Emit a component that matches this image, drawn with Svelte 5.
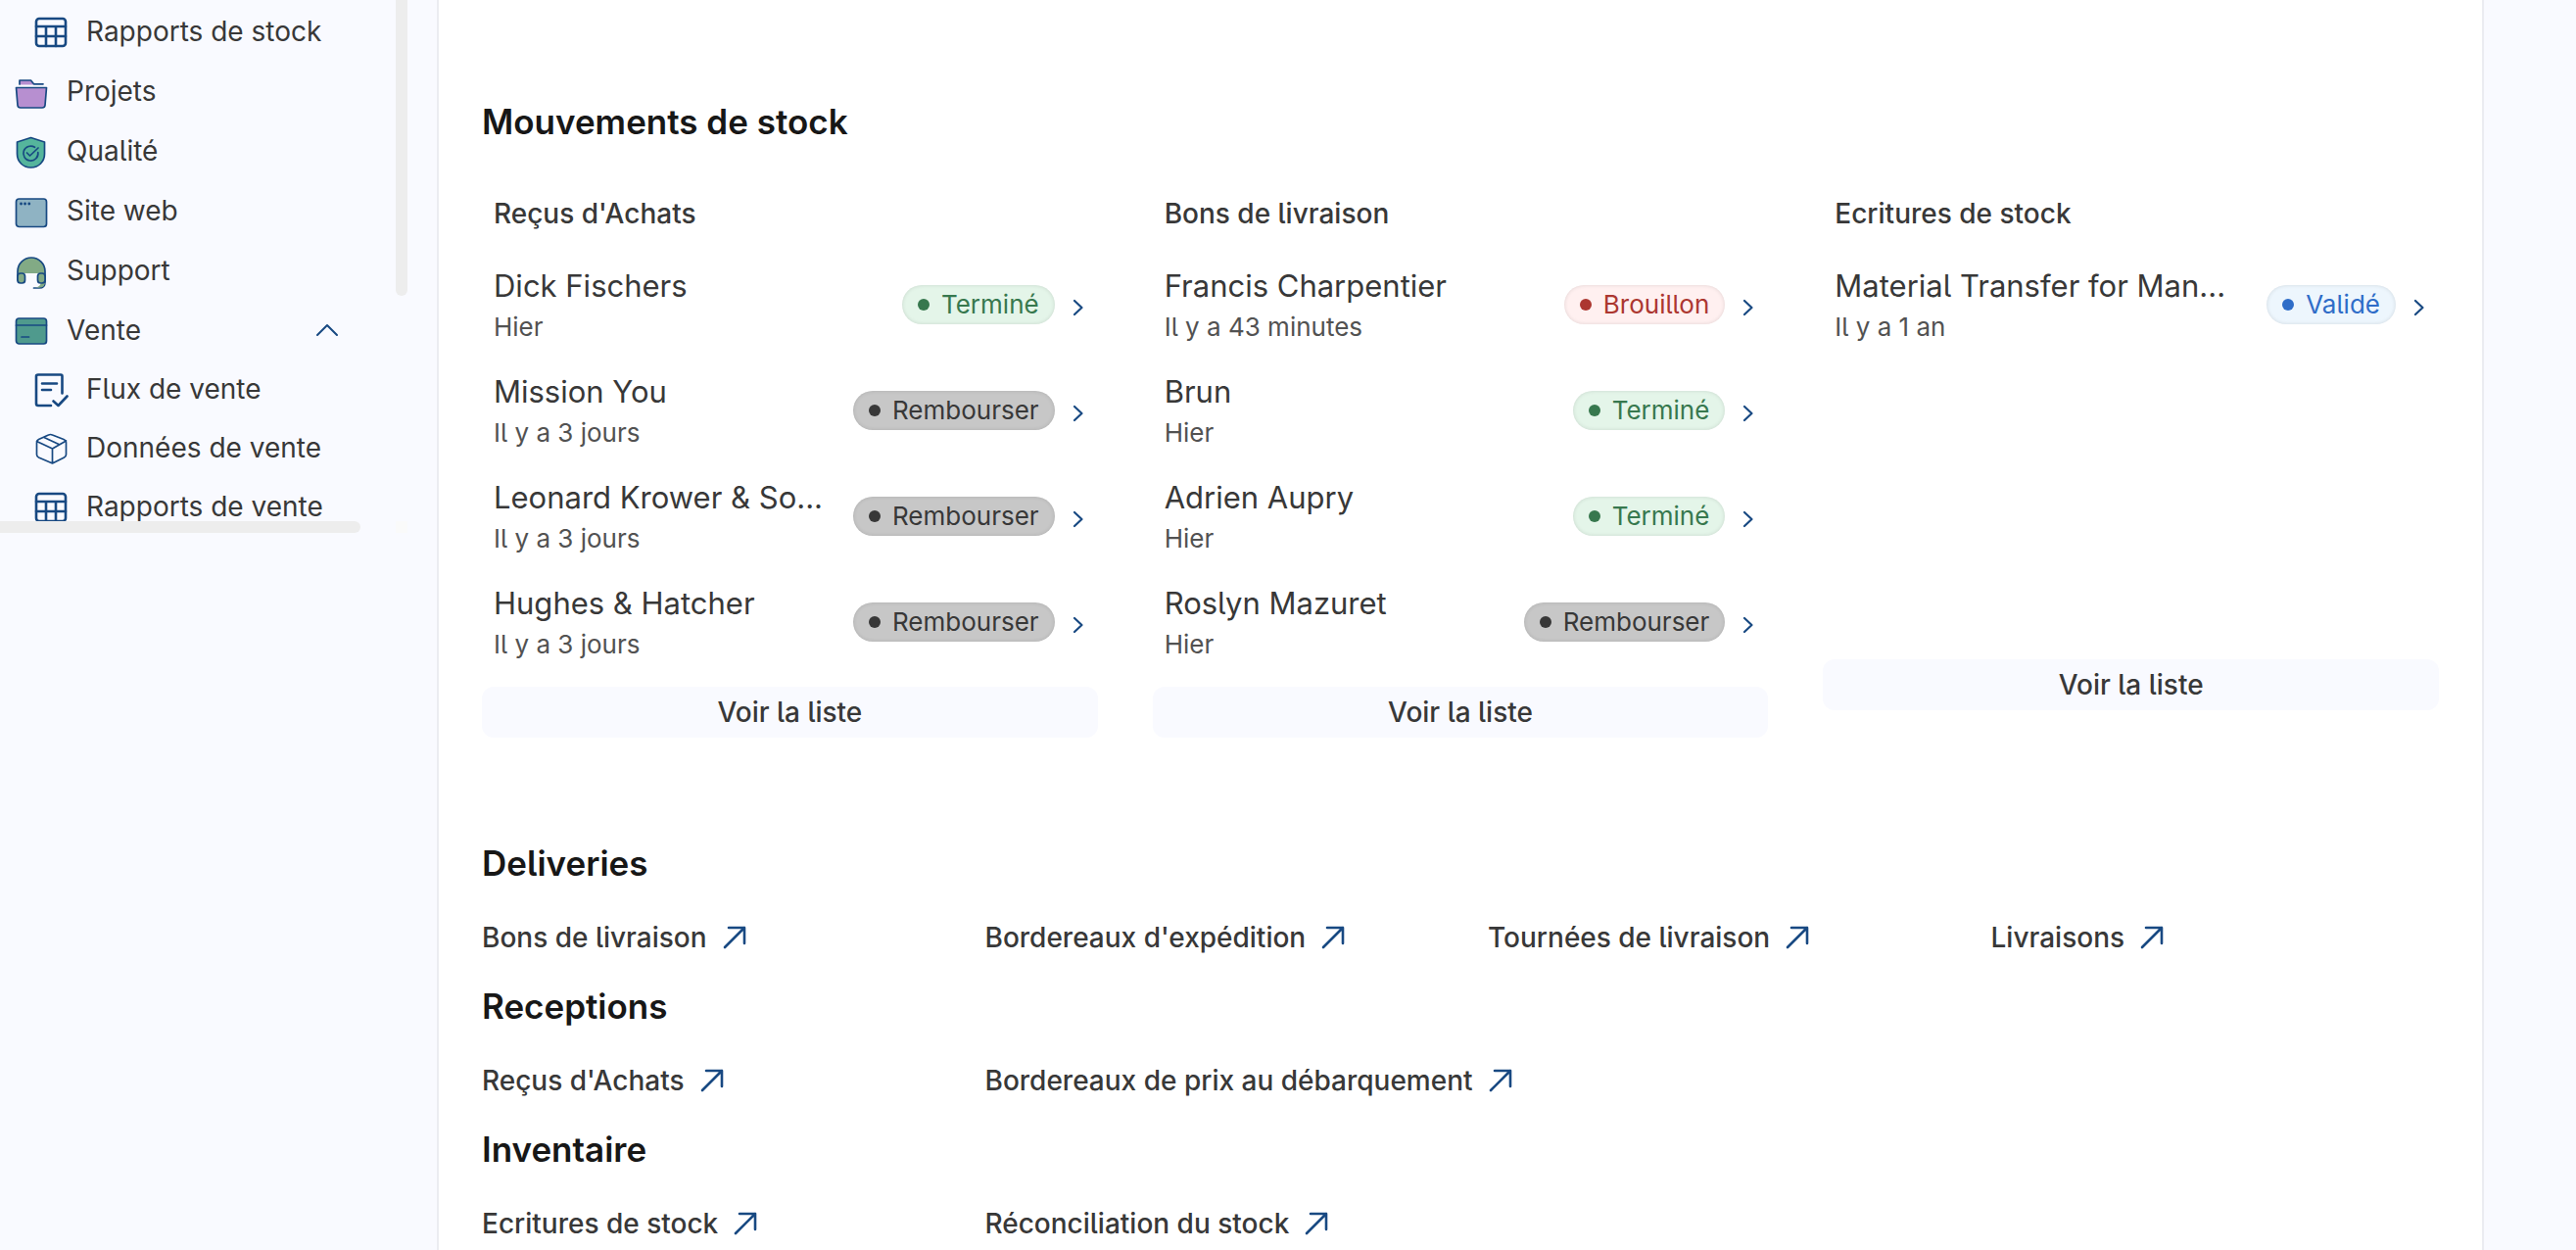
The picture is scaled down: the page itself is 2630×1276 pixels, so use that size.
<script>
  const nav = [
    { label: 'Rapports de stock', icon: 'table', sub: true },
    { label: 'Projets', icon: 'folder' },
    { label: 'Qualité', icon: 'shield' },
    { label: 'Site web', icon: 'window' },
    { label: 'Support', icon: 'headset' },
    { label: 'Vente', icon: 'card', open: true },
    { label: 'Flux de vente', icon: 'flow', sub: true },
    { label: 'Données de vente', icon: 'box', sub: true },
    { label: 'Rapports de vente', icon: 'table', sub: true }
  ];

  const lists = [
    {
      title: "Reçus d'Achats",
      rows: [
        { name: 'Dick Fischers', when: 'Hier', status: 'Terminé', tone: 'green' },
        { name: 'Mission You', when: 'Il y a 3 jours', status: 'Rembourser', tone: 'gray' },
        { name: 'Leonard Krower & So...', when: 'Il y a 3 jours', status: 'Rembourser', tone: 'gray' },
        { name: 'Hughes & Hatcher', when: 'Il y a 3 jours', status: 'Rembourser', tone: 'gray' }
      ]
    },
    {
      title: 'Bons de livraison',
      rows: [
        { name: 'Francis Charpentier', when: 'Il y a 43 minutes', status: 'Brouillon', tone: 'red' },
        { name: 'Brun', when: 'Hier', status: 'Terminé', tone: 'green' },
        { name: 'Adrien Aupry', when: 'Hier', status: 'Terminé', tone: 'green' },
        { name: 'Roslyn Mazuret', when: 'Hier', status: 'Rembourser', tone: 'gray' }
      ]
    },
    {
      title: 'Ecritures de stock',
      rows: [
        { name: 'Material Transfer for Man...', when: 'Il y a 1 an', status: 'Validé', tone: 'blue' }
      ]
    }
  ];

  const groups = [
    { title: 'Deliveries', links: ['Bons de livraison', "Bordereaux d'expédition", 'Tournées de livraison', 'Livraisons'] },
    { title: 'Receptions', links: ["Reçus d'Achats", 'Bordereaux de prix au débarquement'] },
    { title: 'Inventaire', links: ['Ecritures de stock', 'Réconciliation du stock'] }
  ];
</script>

{#snippet icon(name)}
  <svg class="icon" viewBox="0 0 36 36" aria-hidden="true">
    {#if name === 'table'}
      <g class="line">
        <rect x="3" y="4" width="30" height="28" rx="3" />
        <path d="M3 12H33M3 22H33M13 12V32M23 12V32" />
      </g>
    {:else if name === 'folder'}
      <path class="purple" d="M6 9.500V5H17L20 8.800V9.500Z" />
      <path class="thin" d="M6 9V5H17.500L20.500 8.800H30" />
      <path class="thin purple" d="M2.500 12.500H33.500L32 30.500Q31.700 33 29 33H7Q4.300 33 4 30.500Z" />
    {:else if name === 'shield'}
      <path class="thin mint" d="M17.500 2.500L31.500 7V19C31.500 27 25.500 33 17.500 33S3.500 27 3.500 19V7Z" />
      <path class="thin" d="M21.500 12.300A7.500 7.500 0 1 0 24.800 17.500M13.500 18L16.500 21L25 13" />
    {:else if name === 'window'}
      <rect class="thin sky" x="2.500" y="4" width="31" height="28.500" rx="3" />
      <path class="dots" d="M7.500 9H7.600M11.500 9H11.600M15.700 9H15.800" />
    {:else if name === 'headset'}
      <path class="sage" d="M4 19V17A14 14 0 0 1 32 17V19Z" />
      <path class="thin" d="M4 26V17A14 14 0 0 1 32 17V28Q32 34 26 34H20.500" />
      <path class="sage" d="M22 33.500Q27 32.500 27.500 29.500L32 28Q32 33.500 26 33.500Z" />
      <rect class="thin sage" x="4" y="19" width="7.500" height="10" rx="3" />
      <rect class="thin sage" x="24.500" y="19" width="7.500" height="10" rx="3" />
    {:else if name === 'card'}
      <rect class="thin teal" x="2.500" y="4" width="31" height="26" rx="3" />
      <path class="thin" d="M2.500 11H33.500M8 23H15.500" />
    {:else if name === 'flow'}
      <path class="line" d="M18 34H5Q3 34 3 32V4Q3 2.500 5 2.500H28Q29.500 2.500 29.500 4V21.500M9 11.500H24M9 18H18M20.500 29.500L25.500 34L34.500 24.500" />
    {:else if name === 'box'}
      <path class="thin" d="M19.500 33L5.500 27Q3.500 26 3.500 24V11.500Q3.500 9.500 5.500 8.500L15.500 4Q17.500 3 19.500 4L31 8.500Q33.500 9.500 33.500 11.500V24Q33.500 26 31.500 27ZM3.500 10.500L19.500 18L33.500 10M19.500 18V33M11 6.500L26 13.500" />
    {/if}
  </svg>
{/snippet}

<div class="page">
  <aside class="side">
    <nav class="nav" aria-label="Modules">
      {#each nav as item}
        <div class="item" class:sub={item.sub}>
          <a href="#{item.icon}">{@render icon(item.icon)}<span>{item.label}</span></a>
          {#if item.open}
            <button class="toggle" aria-label="Replier Vente">
              <svg viewBox="0 0 24 14" aria-hidden="true"><path d="M2 12L12 2L22 12" /></svg>
            </button>
          {/if}
        </div>
      {/each}
    </nav>
    <div class="vbar"></div>
    <div class="hbar"></div>
    <div class="corner"></div>
  </aside>

  <main class="main">
    <section>
      <h2>Mouvements de stock</h2>
      <div class="lists">
        {#each lists as list}
          <article class="list">
            <h3>{list.title}</h3>
            <ul>
              {#each list.rows as row}
                <li>
                  <div class="who">
                    <span class="name">{row.name}</span>
                    <span class="when">{row.when}</span>
                  </div>
                  <span class="pill {row.tone}">{row.status}</span>
                  <svg class="next" viewBox="0 0 12 18" aria-hidden="true"><path d="M2 2L9.500 9L2 16" /></svg>
                </li>
              {/each}
            </ul>
            <button class="more">Voir la liste</button>
          </article>
        {/each}
      </div>
    </section>

    {#each groups as group}
      <section class="group">
        <h2>{group.title}</h2>
        <div class="links">
          {#each group.links as link}
            <a href="#lien">
              <span>{link}</span>
              <svg viewBox="0 0 24 24" aria-hidden="true"><path d="M2 22L22 2M6 2H22V18" /></svg>
            </a>
          {/each}
        </div>
      </section>
    {/each}
  </main>
</div>

<style>
  :global(body) {
    background: #f9faff;
    overflow: hidden;
  }
  .page {
    display: flex;
    height: 100vh;
    overflow: hidden;
    padding-right: 94px;
    box-sizing: border-box;
    background: #f9faff;
    color: #383838;
    font-family: Inter, 'Liberation Sans', sans-serif;
    font-feature-settings: 'cv05';
    font-size: 28px;
    line-height: 36px;
  }
  h2, h3, ul {
    margin: 0;
    padding: 0;
  }
  a {
    color: inherit;
    text-decoration: none;
  }
  button {
    border: 0;
    padding: 0;
    background: none;
    color: inherit;
    font: inherit;
    font-feature-settings: inherit;
  }
  svg {
    flex: none;
    fill: none;
    stroke: #184982;
    stroke-linecap: round;
    stroke-linejoin: round;
  }

  .side {
    flex: none;
    display: grid;
    grid-template: 532px 12px / 404px 12px;
    width: 446px;
    align-content: start;
  }
  .nav {
    overflow: hidden;
    padding-top: 2px;
  }
  .item {
    display: flex;
    align-items: center;
    justify-content: space-between;
    height: 61px;
    padding: 0 58px 0 14px;
  }
  .item.sub {
    height: 60px;
    padding-left: 34px;
  }
  .item a {
    display: flex;
    align-items: center;
    gap: 18px;
    white-space: nowrap;
  }
  .icon {
    width: 36px;
    height: 36px;
    margin-top: 4px;
  }
  .sub .icon {
    margin-top: 2px;
  }
  .line {
    stroke-width: 2.600;
  }
  .thin {
    stroke-width: 1.700;
  }
  .dots {
    stroke-width: 2.800;
  }
  .purple { fill: #b78fd0; }
  .mint { fill: #55b59c; }
  .sky { fill: #8fb3c3; }
  .sage { fill: #82aa85; }
  path.sage,
  path.purple:not(.thin) { stroke: none; }
  .teal { fill: #4f9a8d; }
  .toggle {
    display: flex;
  }
  .toggle svg {
    width: 24px;
    height: 14px;
    stroke-width: 2;
  }
  .vbar {
    height: 302px;
    border-radius: 0 0 6px 6px;
    background: #ededed;
  }
  .hbar {
    width: 368px;
    border-radius: 0 6px 6px 0;
    background: #ededed;
  }
  .corner {
    background: #fafafa;
  }

  .main {
    flex: 1;
    min-width: 0;
    padding: 102px 44px 0;
    border: solid #ebecf1;
    border-width: 0 2px;
    background: #fff;
  }
  h2 {
    color: #171717;
    font-size: 35px;
    font-weight: 600;
    line-height: 44px;
  }
  .lists {
    display: grid;
    grid-template-columns: repeat(3, minmax(0, 1fr));
    gap: 56px;
    align-items: start;
    margin-top: 54px;
  }
  h3 {
    padding: 0 12px;
    font-size: 28px;
    font-weight: 500;
    line-height: 36px;
  }
  ul {
    min-height: 404px;
    padding-top: 33px;
    list-style: none;
  }
  li {
    display: flex;
    align-items: center;
    height: 84px;
    padding: 0 14px 24px 12px;
  }
  .who {
    display: flex;
    flex: 1;
    flex-direction: column;
    min-width: 0;
    padding-top: 2px;
    white-space: nowrap;
  }
  .name {
    font-size: 31px;
    line-height: 44px;
  }
  .when {
    color: #525252;
    font-size: 26px;
    line-height: 40px;
  }
  .pill {
    display: flex;
    align-items: center;
    gap: 12px;
    height: 40px;
    padding: 0 16px;
    border-radius: 20px;
    box-shadow: inset 0 0 4px rgb(0 0 0 / 12%);
    font-size: 26px;
  }
  .pill::before {
    width: 12px;
    height: 12px;
    border-radius: 50%;
    background: currentColor;
    content: '';
  }
  .green { background: #e4f5e9; color: #37784e; }
  .gray { background: #c7c7c7; color: #383838; }
  .red { background: #fff0f0; color: #ac3730; }
  .blue { background: #edf6fd; color: #2f6dc8; }
  .next {
    width: 12px;
    height: 18px;
    margin-left: 18px;
    margin-top: 6px;
    stroke-width: 2.200;
  }
  .more {
    width: 100%;
    height: 52px;
    border-radius: 12px;
    background: #f9faff;
    font-weight: 500;
  }
  .group {
    padding-bottom: 30px;
  }
  section:first-child {
    padding-bottom: 106px;
  }
  .links {
    display: grid;
    grid-template-columns: repeat(4, minmax(0, 1fr));
    gap: 56px;
    margin-top: 36px;
  }
  .links a {
    display: flex;
    align-items: center;
    gap: 16px;
    font-weight: 500;
    white-space: nowrap;
  }
  .links svg {
    width: 24px;
    height: 24px;
    stroke-width: 2.600;
  }
</style>
